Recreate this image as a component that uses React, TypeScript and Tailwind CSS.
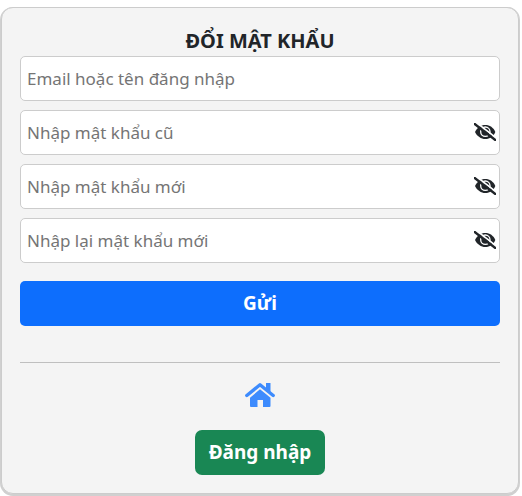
function EyeOffIcon() {
  return (
    <svg viewBox="0 0 66 54" className="h-[18px] w-[22px]" aria-hidden="true">
      <path d="M3 27C9 14 21 6 34 6s25 8 30 21C59 40 47 48 34 48S9 40 3 27Z" fill="#212529" />
      <circle cx="34" cy="26" r="16" fill="#fff" />
      <circle cx="34" cy="26" r="12" fill="#212529" />
      <circle cx="29" cy="21" r="3" fill="#fff" />
      <path d="M5 -3L69 47" stroke="#fff" strokeWidth="5" />
      <path d="M2 3L64 51" stroke="#212529" strokeWidth="7" strokeLinecap="round" />
    </svg>
  );
}

function HomeIcon() {
  return (
    <svg viewBox="0 0 30 24" className="h-6 w-[30px]" aria-hidden="true" fill="currentColor">
      <path d="M21 0h4.500v9L21 5.500Z" />
      <path d="M1.800 12.500L15 1.800L28.200 12.500" fill="none" stroke="currentColor" strokeWidth="3.400" strokeLinecap="round" strokeLinejoin="round" />
      <path d="M15 6.200L25.500 14.800V23a1 1 0 0 1-1 1H18v-7h-5.500v7H6a1 1 0 0 1-1-1v-8.200Z" />
    </svg>
  );
}

function Field({ label, type = "text" }: { label: string; type?: string }) {
  return (
    <div className="relative">
      <input
        type={type}
        aria-label={label}
        placeholder={label}
        className="block h-[45px] w-full rounded-[5px] border border-[#ccc] bg-white px-1.5 text-[17px] leading-8 text-[#212529] placeholder:text-[#757575]"
      />
      {type === "password" && (
        <button type="button" aria-label="Hiện mật khẩu" className="absolute top-0 right-1 flex h-11 items-center">
          <EyeOffIcon />
        </button>
      )}
    </div>
  );
}

export default function App() {
  return (
    <div className="bg-white pt-[7px] pr-[3px] pb-0.5 pl-px font-['Noto_Sans','Open_Sans',sans-serif]">
      <form className="flex flex-col rounded-[12px] border border-[#ccc] bg-[#f4f4f4] p-[18px] shadow-[0_1px_0_1px_#d0d0d0]">
        <h1 className="text-center text-[20px] leading-[30px] font-bold text-[#212529]">ĐỔI MẬT KHẨU</h1>
        <div className="flex flex-col gap-[9px]">
          <Field label="Email hoặc tên đăng nhập" />
          <Field label="Nhập mật khẩu cũ" type="password" />
          <Field label="Nhập mật khẩu mới" type="password" />
          <Field label="Nhập lại mật khẩu mới" type="password" />
        </div>
        <button type="submit" className="mt-[18px] h-[45px] rounded-[5px] bg-[#0d6efd] text-[19px] font-bold text-white">Gửi</button>
        <hr className="mt-9 border-t border-[#bfbfbf]" />
        <a href="#home" aria-label="Trang chủ" className="mt-5 self-center text-[#3d8bfd]">
          <HomeIcon />
        </a>
        <button type="button" className="mt-[23px] h-[45px] self-center rounded-[7px] bg-[#198754] px-3.5 text-[19px] font-bold text-white">Đăng nhập</button>
      </form>
    </div>
  );
}
